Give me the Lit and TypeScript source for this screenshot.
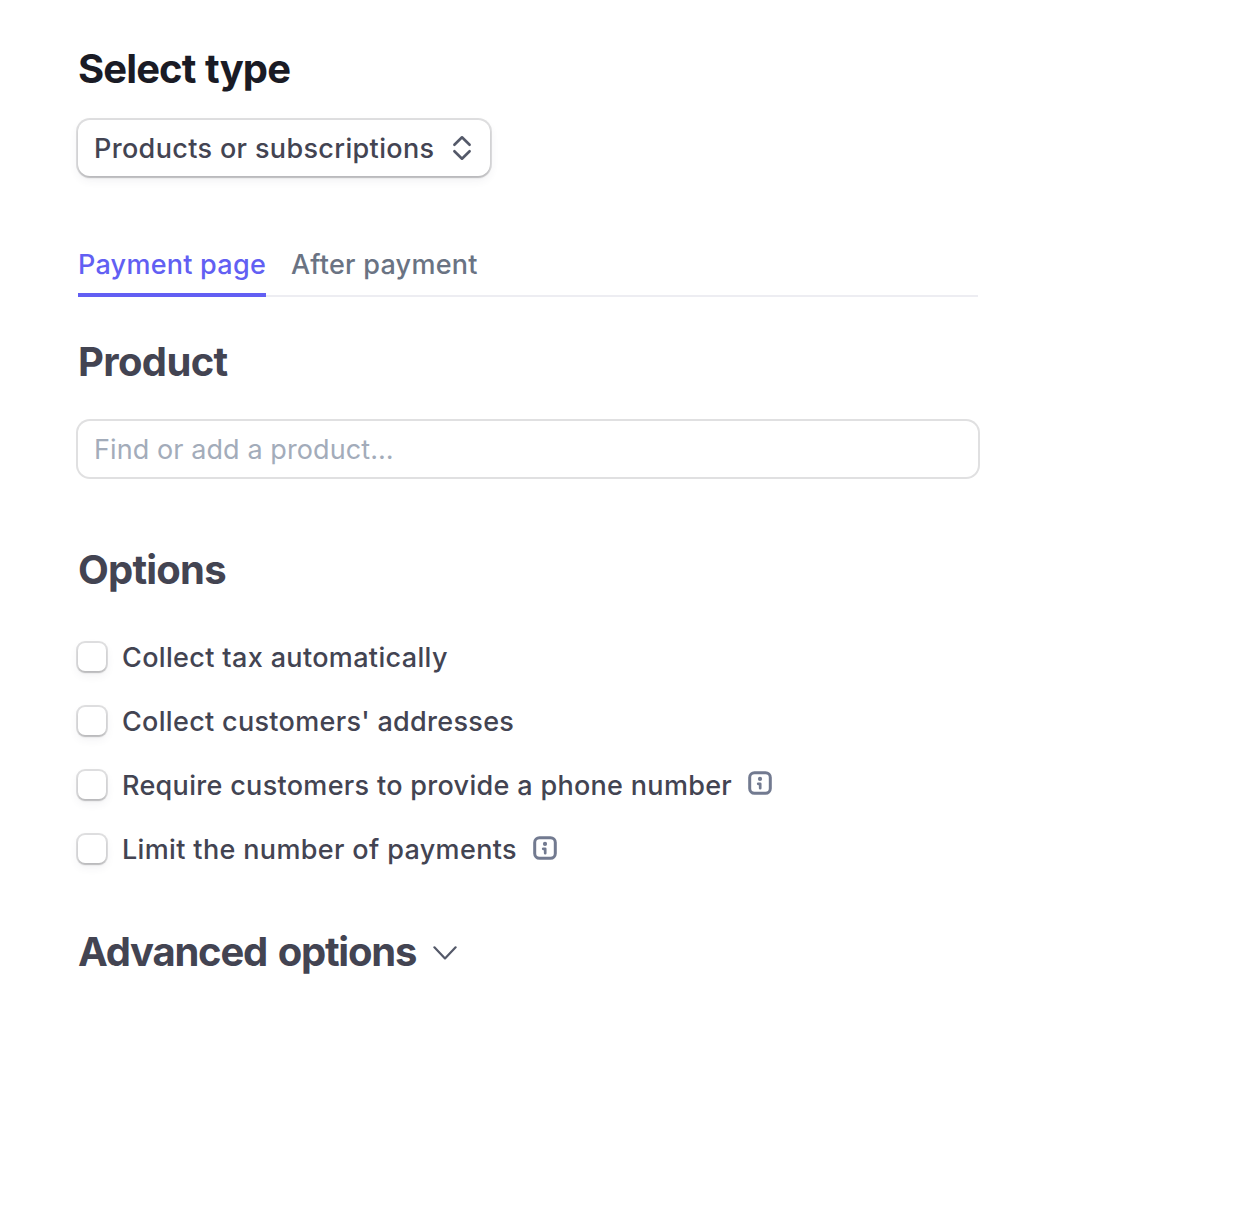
import { LitElement, html, css, svg, nothing } from "lit";
import { customElement, property } from "lit/decorators.js";

const infoIcon = html`<svg class="info" viewBox="0 0 24 24" width="24" height="24" fill="none">
  ${svg`<rect x="1.7" y="1.7" width="20.6" height="20.6" rx="4.8" stroke="#727a90" stroke-width="3"/>
  <circle cx="12" cy="7.9" r="2.1" fill="#727a90"/>
  <path d="M10.2 12.8h2v4.4" stroke="#727a90" stroke-width="2.7" stroke-linecap="round" stroke-linejoin="round"/>`}
</svg>`;

@customElement("option-row")
class OptionRow extends LitElement {
  @property() label = "";
  @property({ type: Boolean }) info = false;

  static styles = css`
    :host { display: block; letter-spacing: 0.31px; }
    :host(.loose) { letter-spacing: 0.35px; }
    :host(.raised) .info { margin-top: -5px; }
    .row { display: flex; align-items: center; height: 32px; }
    .box {
      box-sizing: border-box; width: 28px; height: 28px; margin: 0 16px 0 0; flex: none;
      border-radius: 7px; background: #fff;
      box-shadow: 0 0 0 2px rgba(60, 60, 66, 0.16), 0 2px 2px 0 rgba(0, 0, 0, 0.14), 0 4px 10px 0 rgba(60, 66, 87, 0.08);
    }
    .label { white-space: nowrap; padding-top: 2px; }
    .info { display: block; margin-left: 16px; margin-top: -3px; flex: none; }
  `;

  render() {
    return html`<div class="row">
      <span class="box" role="checkbox" aria-checked="false"></span>
      <span class="label">${this.label}</span>
      ${this.info ? infoIcon : nothing}
    </div>`;
  }
}

@customElement("app-root")
class AppRoot extends LitElement {
  static styles = css`
    :host {
      display: block; box-sizing: border-box; min-height: 1224px; background: #fff;
      padding: 45px 0 0 78px; color: #434452;
      font-family: Inter, "Liberation Sans", sans-serif;
      font-size: 27px; line-height: 32px; font-weight: 450; letter-spacing: 0.31px;
    }
    .panel { width: 900px; display: flex; flex-direction: column; align-items: flex-start; }
    h2 { margin: 0; font-size: 40px; line-height: 48px; font-weight: 700; letter-spacing: -0.8px; white-space: nowrap; }
    .dark { color: #1a1b25; letter-spacing: -0.9px; word-spacing: 1px; }
    .select {
      display: flex; align-items: center; justify-content: space-between; box-sizing: border-box;
      width: 412px; height: 56px; margin-top: 27px; padding: 0 18px 0 16px;
      border-radius: 12px; background: #fff; white-space: nowrap;
      box-shadow: 0 0 0 2px rgba(60, 60, 66, 0.16), 0 2px 2px 0 rgba(0, 0, 0, 0.14), 0 4px 10px 0 rgba(60, 66, 87, 0.08);
    }
    .value { padding-top: 2px; letter-spacing: 0.35px; }
    .tabs {
      display: flex; gap: 25px; align-self: stretch; height: 49px; margin-top: 72px;
      box-shadow: inset 0 -2px #ededf2; color: #6a7383; letter-spacing: 0.25px;
    }
    .tab { box-sizing: border-box; height: 49px; padding-top: 1px; white-space: nowrap; }
    .active { color: #625ff3; border-bottom: 4px solid #625ff3; }
    .product { margin-top: 41px; letter-spacing: -0.65px; }
    .field {
      box-sizing: border-box; align-self: stretch; height: 56px; margin-top: 35px; padding: 13px 16px 11px;
      border-radius: 12px; box-shadow: 0 0 0 2px #e0e0e1; color: #a3acba; font-weight: 400; letter-spacing: 0.09px;
    }
    .options { margin-top: 69px; }
    .list { display: flex; flex-direction: column; gap: 32px; margin-top: 47px; }
    .advanced { display: flex; align-items: center; gap: 17px; margin-top: 63px; }
    .advanced h2 { letter-spacing: -1.24px; word-spacing: 2.5px; }
    .advanced svg { margin-top: 2px; }
  `;

  render() {
    return html`<main class="panel">
      <h2 class="dark">Select type</h2>
      <div class="select" role="button">
        <span class="value">Products or subscriptions</span>
        <svg width="20" height="26" viewBox="0 0 20 26" fill="none" stroke="#545969" stroke-width="2.6" stroke-linecap="round" stroke-linejoin="round">
          <path d="M2.4 9.8 10 2.3l7.6 7.5M2.4 16.2 10 23.7l7.6-7.5" />
        </svg>
      </div>
      <nav class="tabs">
        <span class="tab active">Payment page</span>
        <span class="tab">After payment</span>
      </nav>
      <h2 class="product">Product</h2>
      <div class="field">Find or add a product…</div>
      <h2 class="options">Options</h2>
      <div class="list">
        <option-row class="loose" label="Collect tax automatically"></option-row>
        <option-row label="Collect customers' addresses"></option-row>
        <option-row class="raised" label="Require customers to provide a phone number" info></option-row>
        <option-row class="loose" label="Limit the number of payments" info></option-row>
      </div>
      <div class="advanced">
        <h2>Advanced options</h2>
        <svg width="24" height="14" viewBox="0 0 24 14" fill="none" stroke="#545969" stroke-width="2.2" stroke-linecap="round" stroke-linejoin="round">
          <path d="M1.4 1.3 12 12.4 22.6 1.3" />
        </svg>
      </div>
    </main>`;
  }
}
